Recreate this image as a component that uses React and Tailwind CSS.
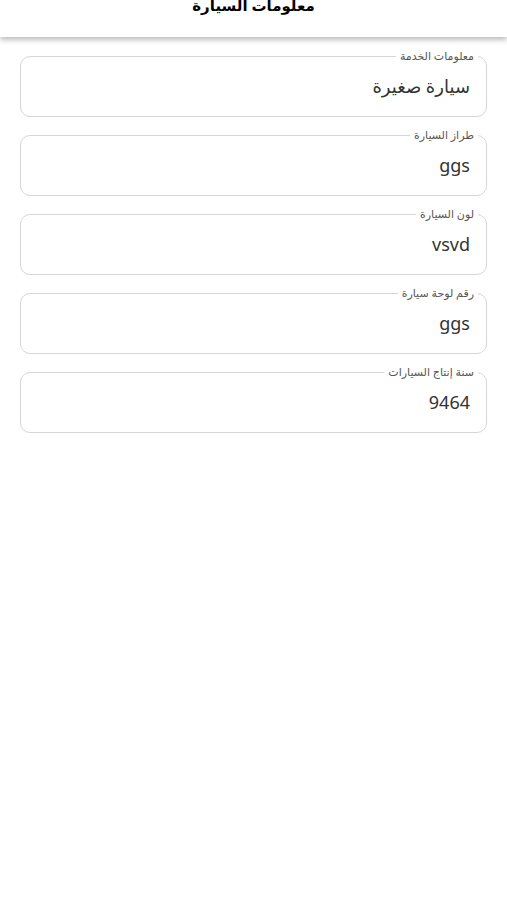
import React from "react";

const fields = [
  { label: "معلومات الخدمة", value: "سيارة صغيرة" },
  { label: "طراز السيارة", value: "ggs" },
  { label: "لون السيارة", value: "vsvd" },
  { label: "رقم لوحة سيارة", value: "ggs" },
  { label: "سنة إنتاج السيارات", value: "9464" },
];

export default function App() {
  return (
    <div
      dir="rtl"
      className="w-[507px] h-[900px] bg-white overflow-hidden"
      style={{ fontFamily: '"Noto Sans", "DejaVu Sans", sans-serif' }}
    >
      <header className="h-[37px] bg-white shadow-[0_3px_5px_rgba(0,0,0,0.25)] flex justify-center overflow-hidden relative z-10">
        <h1 className="text-[15px] font-bold text-black leading-[20px] -mt-[5px]">
          معلومات السيارة
        </h1>
      </header>
      <main className="px-[20px] pt-[12px] flex flex-col gap-[11px]">
        {fields.map((f, i) => (
          <fieldset
            key={i}
            className="border border-[#d6d6d6] rounded-[10px] px-[8px] pb-[18px] m-0"
          >
            <legend className="px-[4px] text-[11px] leading-[14px] text-[#555555]">
              {f.label}
            </legend>
            <div className="pt-[11px] pr-[8px] text-[18px] leading-[24px] text-[#333333]">
              {f.value}
            </div>
          </fieldset>
        ))}
      </main>
    </div>
  );
}
